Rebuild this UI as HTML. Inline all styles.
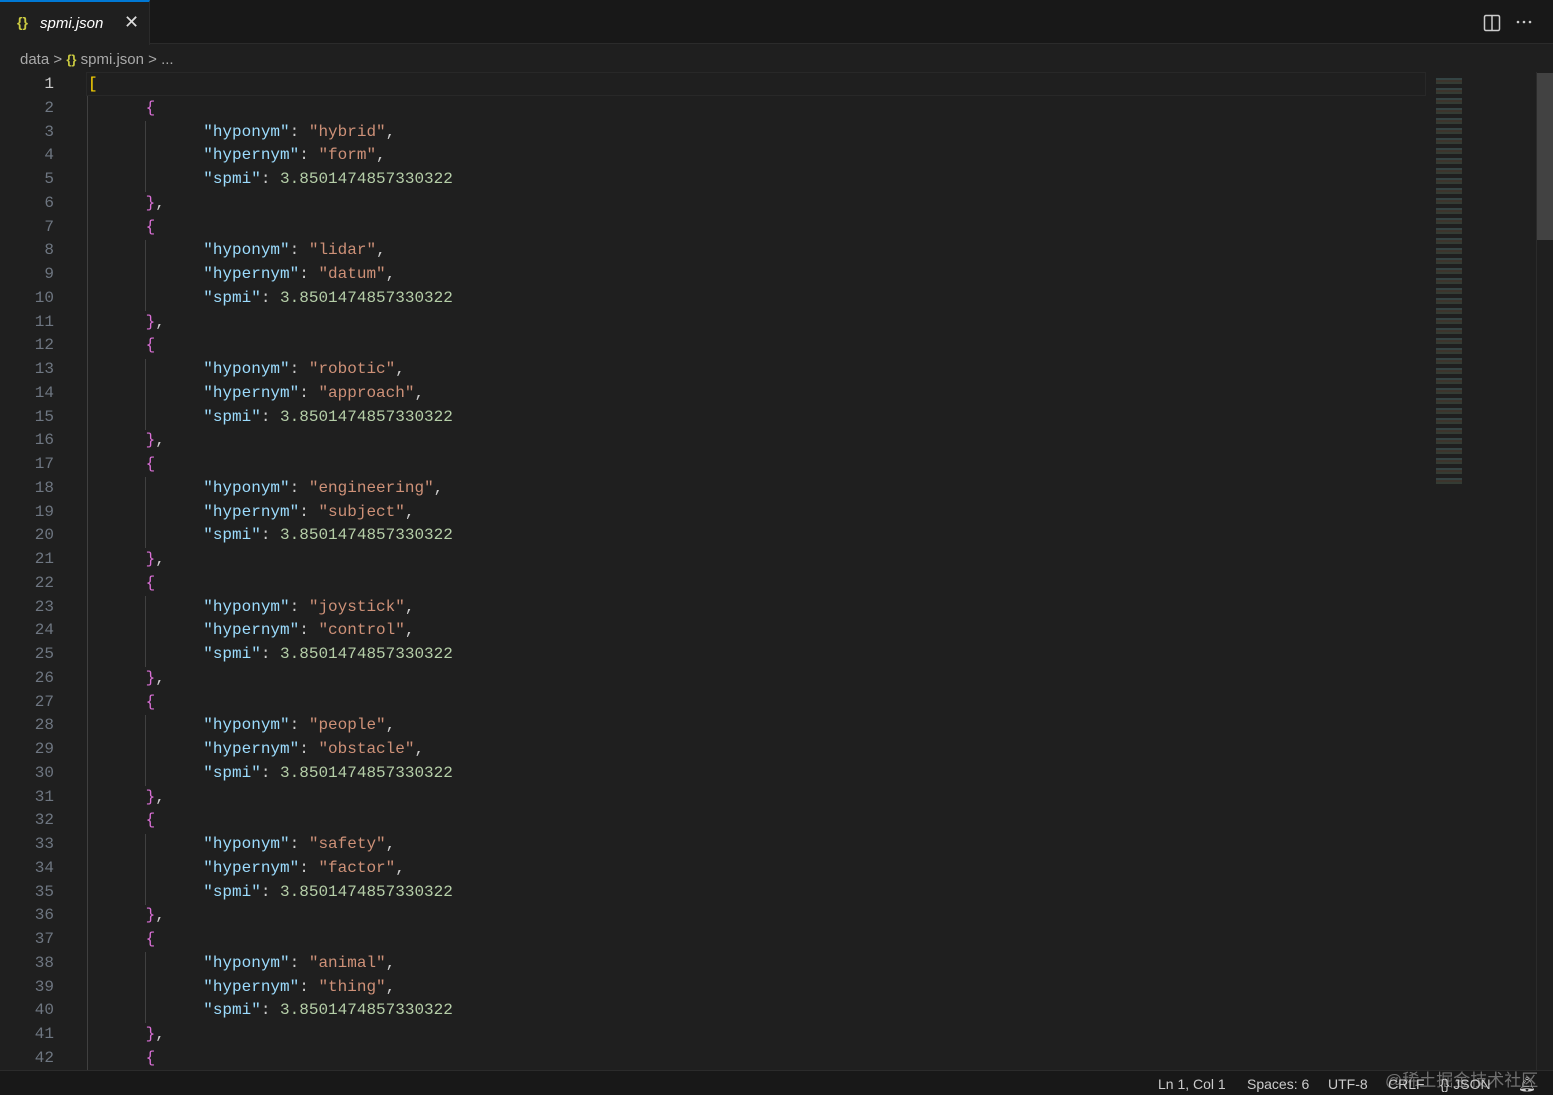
<!DOCTYPE html>
<html><head><meta charset="utf-8"><style>
*{margin:0;padding:0;box-sizing:border-box}
body{width:1553px;height:1095px;background:#1f1f1f;overflow:hidden;position:relative;font-family:"Liberation Sans",sans-serif}
.tabbar{position:absolute;left:0;top:0;width:1553px;height:44px;background:#181818;border-bottom:1px solid #2b2b2b}
.tab{position:absolute;left:0;top:0;width:150px;height:45px;background:#1f1f1f;border-top:2px solid #0078d4;border-right:1px solid #2b2b2b}
.tab .ic{position:absolute;left:17px;top:12px;color:#cbcb41;font-size:14px;font-weight:bold}
.tab .nm{position:absolute;left:40px;top:13px;color:#fff;font-style:italic;font-size:15px}
.tab .x{position:absolute;left:124px;top:10px;color:#ddd;font-size:18px}
.crumb{position:absolute;left:20px;top:51px;color:#a9a9a9;font-size:15px}
.crumb .b{color:#cbcb41;font-weight:bold;font-size:13px}
.code{position:absolute;left:0;top:73px;width:1430px;font-family:"Liberation Mono",monospace;font-size:16px}
.l{height:23.75px;line-height:23.75px;position:relative;white-space:pre}
.n{position:absolute;left:0;width:54px;text-align:right;color:#6e7681}
.n.a{color:#ccc}
.t{position:absolute;left:88px;color:#ccc}
.k{color:#9cdcfe}.s{color:#ce9178}.v{color:#b5cea8}.g{color:#ffd700}.p{color:#da70d6}
.cur{position:absolute;left:86px;top:72px;width:1340px;height:24px;border:1px solid #282828}
.guide{position:absolute;width:1px;background:#404040}
.mini{position:absolute;left:1436px;top:76px;width:26px;height:408px;opacity:.5;background:repeating-linear-gradient(#1f1f1f 0 2px,#4a6a6a 2px 4px,#5a4a3a 4px 6px,#4a5a4a 6px 8px,#1f1f1f 8px 10px)}
.sb{position:absolute;left:1537px;top:73px;width:16px;height:167px;background:#424242}
.sbl{position:absolute;left:1536px;top:72px;width:1px;height:998px;background:#2b2b2b}
.status{position:absolute;left:0;top:1070px;width:1553px;height:25px;background:#181818;border-top:1px solid #2b2b2b;color:#ccc;font-size:14px}
.status span{position:absolute;top:5px}
</style></head><body>
<div class="tabbar"></div>
<div class="tab"><span class="ic">{}</span><span class="nm">spmi.json</span><span class="x">✕</span></div>
<svg style="position:absolute;left:1483px;top:14px" width="18" height="18" viewBox="0 0 18 18"><rect x="1.5" y="1.5" width="15" height="15" rx="1.5" fill="none" stroke="#ccc" stroke-width="1.5"/><line x1="9" y1="2" x2="9" y2="16" stroke="#ccc" stroke-width="1.5"/></svg>
<svg style="position:absolute;left:1516px;top:20px" width="18" height="4"><circle cx="2" cy="2" r="1.3" fill="#ccc"/><circle cx="8" cy="2" r="1.3" fill="#ccc"/><circle cx="14" cy="2" r="1.3" fill="#ccc"/></svg>
<div class="crumb">data <span style="color:#aaa">&gt;</span> <span class="b">{}</span> spmi.json <span>&gt;</span> ...</div>
<div class="cur"></div>
<div class="guide" style="left:87px;top:96px;height:974px"></div>
<div class="guide" style="left:145px;top:121px;height:71px"></div>
<div class="guide" style="left:145px;top:240px;height:71px"></div>
<div class="guide" style="left:145px;top:359px;height:71px"></div>
<div class="guide" style="left:145px;top:477px;height:71px"></div>
<div class="guide" style="left:145px;top:596px;height:71px"></div>
<div class="guide" style="left:145px;top:715px;height:71px"></div>
<div class="guide" style="left:145px;top:834px;height:71px"></div>
<div class="guide" style="left:145px;top:952px;height:71px"></div>
<div class="code">
<div class="l"><span class="n a">1</span><span class="t"><span class="g">[</span></span></div>
<div class="l"><span class="n">2</span><span class="t">      <span class="p">{</span></span></div>
<div class="l"><span class="n">3</span><span class="t">            <span class="k">"hyponym"</span>: <span class="s">"hybrid"</span>,</span></div>
<div class="l"><span class="n">4</span><span class="t">            <span class="k">"hypernym"</span>: <span class="s">"form"</span>,</span></div>
<div class="l"><span class="n">5</span><span class="t">            <span class="k">"spmi"</span>: <span class="v">3.8501474857330322</span></span></div>
<div class="l"><span class="n">6</span><span class="t">      <span class="p">}</span>,</span></div>
<div class="l"><span class="n">7</span><span class="t">      <span class="p">{</span></span></div>
<div class="l"><span class="n">8</span><span class="t">            <span class="k">"hyponym"</span>: <span class="s">"lidar"</span>,</span></div>
<div class="l"><span class="n">9</span><span class="t">            <span class="k">"hypernym"</span>: <span class="s">"datum"</span>,</span></div>
<div class="l"><span class="n">10</span><span class="t">            <span class="k">"spmi"</span>: <span class="v">3.8501474857330322</span></span></div>
<div class="l"><span class="n">11</span><span class="t">      <span class="p">}</span>,</span></div>
<div class="l"><span class="n">12</span><span class="t">      <span class="p">{</span></span></div>
<div class="l"><span class="n">13</span><span class="t">            <span class="k">"hyponym"</span>: <span class="s">"robotic"</span>,</span></div>
<div class="l"><span class="n">14</span><span class="t">            <span class="k">"hypernym"</span>: <span class="s">"approach"</span>,</span></div>
<div class="l"><span class="n">15</span><span class="t">            <span class="k">"spmi"</span>: <span class="v">3.8501474857330322</span></span></div>
<div class="l"><span class="n">16</span><span class="t">      <span class="p">}</span>,</span></div>
<div class="l"><span class="n">17</span><span class="t">      <span class="p">{</span></span></div>
<div class="l"><span class="n">18</span><span class="t">            <span class="k">"hyponym"</span>: <span class="s">"engineering"</span>,</span></div>
<div class="l"><span class="n">19</span><span class="t">            <span class="k">"hypernym"</span>: <span class="s">"subject"</span>,</span></div>
<div class="l"><span class="n">20</span><span class="t">            <span class="k">"spmi"</span>: <span class="v">3.8501474857330322</span></span></div>
<div class="l"><span class="n">21</span><span class="t">      <span class="p">}</span>,</span></div>
<div class="l"><span class="n">22</span><span class="t">      <span class="p">{</span></span></div>
<div class="l"><span class="n">23</span><span class="t">            <span class="k">"hyponym"</span>: <span class="s">"joystick"</span>,</span></div>
<div class="l"><span class="n">24</span><span class="t">            <span class="k">"hypernym"</span>: <span class="s">"control"</span>,</span></div>
<div class="l"><span class="n">25</span><span class="t">            <span class="k">"spmi"</span>: <span class="v">3.8501474857330322</span></span></div>
<div class="l"><span class="n">26</span><span class="t">      <span class="p">}</span>,</span></div>
<div class="l"><span class="n">27</span><span class="t">      <span class="p">{</span></span></div>
<div class="l"><span class="n">28</span><span class="t">            <span class="k">"hyponym"</span>: <span class="s">"people"</span>,</span></div>
<div class="l"><span class="n">29</span><span class="t">            <span class="k">"hypernym"</span>: <span class="s">"obstacle"</span>,</span></div>
<div class="l"><span class="n">30</span><span class="t">            <span class="k">"spmi"</span>: <span class="v">3.8501474857330322</span></span></div>
<div class="l"><span class="n">31</span><span class="t">      <span class="p">}</span>,</span></div>
<div class="l"><span class="n">32</span><span class="t">      <span class="p">{</span></span></div>
<div class="l"><span class="n">33</span><span class="t">            <span class="k">"hyponym"</span>: <span class="s">"safety"</span>,</span></div>
<div class="l"><span class="n">34</span><span class="t">            <span class="k">"hypernym"</span>: <span class="s">"factor"</span>,</span></div>
<div class="l"><span class="n">35</span><span class="t">            <span class="k">"spmi"</span>: <span class="v">3.8501474857330322</span></span></div>
<div class="l"><span class="n">36</span><span class="t">      <span class="p">}</span>,</span></div>
<div class="l"><span class="n">37</span><span class="t">      <span class="p">{</span></span></div>
<div class="l"><span class="n">38</span><span class="t">            <span class="k">"hyponym"</span>: <span class="s">"animal"</span>,</span></div>
<div class="l"><span class="n">39</span><span class="t">            <span class="k">"hypernym"</span>: <span class="s">"thing"</span>,</span></div>
<div class="l"><span class="n">40</span><span class="t">            <span class="k">"spmi"</span>: <span class="v">3.8501474857330322</span></span></div>
<div class="l"><span class="n">41</span><span class="t">      <span class="p">}</span>,</span></div>
<div class="l"><span class="n">42</span><span class="t">      <span class="p">{</span></span></div>
</div>
<div class="mini"></div>
<div class="sbl"></div>
<div class="sb"></div>
<div class="status">
<span style="left:1158px">Ln 1, Col 1</span>
<span style="left:1247px">Spaces: 6</span>
<span style="left:1328px">UTF-8</span>
<span style="left:1388px">CRLF</span>
<span style="left:1440px">{} JSON</span>
<span style="left:1518px">🔔︎</span>
<span style="left:1385px;top:-5px;color:rgba(200,200,200,0.5);font-size:17px;font-family:'Liberation Sans','Noto Sans CJK SC',sans-serif">@稀土掘金技术社区</span>
</div>
</body></html>
